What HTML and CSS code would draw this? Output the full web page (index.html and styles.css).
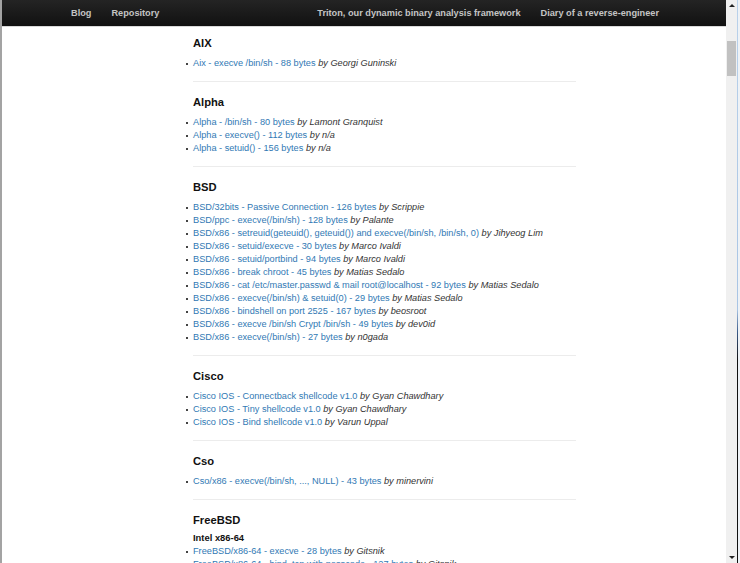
FILE: index.html
```html
<!DOCTYPE html>
<html lang="en">
<head>
<meta charset="utf-8">
<title>Shellcodes database</title>
<link rel="stylesheet" href="styles.css">
</head>
<body>
<div class="window">
  <div class="frame-left"></div>
  <div class="viewport">
    <nav class="navbar">
      <div class="nav-inner">
        <ul class="nav">
          <li><a href="#">Blog</a></li>
          <li><a href="#">Repository</a></li>
        </ul>
        <ul class="nav">
          <li><a href="#">Triton, our dynamic binary analysis framework</a></li>
          <li><a href="#">Diary of a reverse-engineer</a></li>
        </ul>
      </div>
    </nav>
    <main class="content">
      <section class="group">
        <h2 class="group-title">AIX</h2>
        <ul class="sc-list">
          <li><a href="#">Aix - execve /bin/sh - 88 bytes</a> <em>by Georgi Guninski</em></li>
        </ul>
      </section>
      <hr class="sep">
      <section class="group">
        <h2 class="group-title">Alpha</h2>
        <ul class="sc-list">
          <li><a href="#">Alpha - /bin/sh - 80 bytes</a> <em>by Lamont Granquist</em></li>
          <li><a href="#">Alpha - execve() - 112 bytes</a> <em>by n/a</em></li>
          <li><a href="#">Alpha - setuid() - 156 bytes</a> <em>by n/a</em></li>
        </ul>
      </section>
      <hr class="sep">
      <section class="group">
        <h2 class="group-title">BSD</h2>
        <ul class="sc-list">
          <li><a href="#">BSD/32bits - Passive Connection - 126 bytes</a> <em>by Scrippie</em></li>
          <li><a href="#">BSD/ppc - execve(/bin/sh) - 128 bytes</a> <em>by Palante</em></li>
          <li><a href="#">BSD/x86 - setreuid(geteuid(), geteuid()) and execve(/bin/sh, /bin/sh, 0)</a> <em>by Jihyeog Lim</em></li>
          <li><a href="#">BSD/x86 - setuid/execve - 30 bytes</a> <em>by Marco Ivaldi</em></li>
          <li><a href="#">BSD/x86 - setuid/portbind - 94 bytes</a> <em>by Marco Ivaldi</em></li>
          <li><a href="#">BSD/x86 - break chroot - 45 bytes</a> <em>by Matias Sedalo</em></li>
          <li><a href="#">BSD/x86 - cat /etc/master.passwd &amp; mail root@localhost - 92 bytes</a> <em>by Matias Sedalo</em></li>
          <li><a href="#">BSD/x86 - execve(/bin/sh) &amp; setuid(0) - 29 bytes</a> <em>by Matias Sedalo</em></li>
          <li><a href="#">BSD/x86 - bindshell on port 2525 - 167 bytes</a> <em>by beosroot</em></li>
          <li><a href="#">BSD/x86 - execve /bin/sh Crypt /bin/sh - 49 bytes</a> <em>by dev0id</em></li>
          <li><a href="#">BSD/x86 - execve(/bin/sh) - 27 bytes</a> <em>by n0gada</em></li>
        </ul>
      </section>
      <hr class="sep">
      <section class="group">
        <h2 class="group-title">Cisco</h2>
        <ul class="sc-list">
          <li><a href="#">Cisco IOS - Connectback shellcode v1.0</a> <em>by Gyan Chawdhary</em></li>
          <li><a href="#">Cisco IOS - Tiny shellcode v1.0</a> <em>by Gyan Chawdhary</em></li>
          <li><a href="#">Cisco IOS - Bind shellcode v1.0</a> <em>by Varun Uppal</em></li>
        </ul>
      </section>
      <hr class="sep">
      <section class="group">
        <h2 class="group-title">Cso</h2>
        <ul class="sc-list">
          <li><a href="#">Cso/x86 - execve(/bin/sh, ..., NULL) - 43 bytes</a> <em>by minervini</em></li>
        </ul>
      </section>
      <hr class="sep">
      <section class="group">
        <h2 class="group-title with-sub">FreeBSD</h2>
        <h3 class="arch-title">Intel x86-64</h3>
        <ul class="sc-list">
          <li><a href="#">FreeBSD/x86-64 - execve - 28 bytes</a> <em>by Gitsnik</em></li>
          <li><a href="#">FreeBSD/x86-64 - bind_tcp with passcode - 127 bytes</a> <em>by Gitsnik</em></li>
        </ul>
      </section>
    </main>
  </div>
  <div class="scrollbar">
    <div class="sb-arrow sb-up"></div>
    <div class="sb-track"><div class="sb-thumb"></div></div>
    <div class="sb-arrow sb-down"></div>
  </div>
  <div class="frame-right"></div>
</div>
</body>
</html>
```

FILE: styles.css
```css
html, body {
  margin: 0;
  padding: 0;
  height: 100%;
  overflow: hidden;
  background: #ffffff;
  font-family: "Liberation Sans", Arial, sans-serif;
}

.window {
  display: flex;
  height: 563px;
  width: 740px;
}

.frame-left {
  width: 2px;
  flex: none;
  background: #a3a3a3;
}

.viewport {
  width: 724px;
  flex: none;
  overflow: hidden;
  background: #ffffff;
}

/* ---------- navbar ---------- */
.navbar {
  height: 26px;
  background: linear-gradient(#242424, #111111);
  border-bottom: 1px solid #d9d9d9;
}

.nav-inner {
  display: flex;
  justify-content: space-between;
  padding: 0 57px 0 59px;
}

.nav {
  display: flex;
  list-style: none;
  margin: 0;
  padding: 0;
}

.nav a {
  display: block;
  padding: 0 10px;
  line-height: 26px;
  font-size: 9.2px;
  font-weight: bold;
  color: #c4c4c4;
  text-decoration: none;
}

/* ---------- content ---------- */
.content {
  margin-left: 191px;
  width: 383px;
  padding-top: 7.5px;
}

.group-title {
  margin: 0 0 6px;
  font-size: 11.2px;
  line-height: 16px;
  font-weight: bold;
  color: #111111;
}

.group-title.with-sub {
  margin-bottom: 3px;
}

.arch-title {
  margin: 0 0 1.5px;
  font-size: 9.4px;
  line-height: 13px;
  font-weight: bold;
  color: #111111;
}

.sep {
  margin: 11px 0 12px;
  border: 0;
  border-top: 1px solid #ececec;
  height: 0;
}

.sc-list {
  list-style: none;
  margin: 0;
  padding: 0;
}

.sc-list li {
  position: relative;
  font-size: 9.2px;
  line-height: 13px;
  color: #333333;
  white-space: nowrap;
}

.sc-list li::before {
  content: "";
  position: absolute;
  left: -7px;
  top: 6px;
  width: 2px;
  height: 2px;
  background: #444444;
}

.sc-list a {
  color: #3179b4;
  text-decoration: none;
}

.sc-list em {
  font-style: italic;
  color: #333333;
}

/* ---------- fake scrollbar ---------- */
.scrollbar {
  width: 11px;
  flex: none;
  background: #f0f0f0;
  display: flex;
  flex-direction: column;
}

.sb-arrow {
  height: 11px;
  flex: none;
  display: flex;
  align-items: center;
  justify-content: center;
}

.sb-arrow::before {
  content: "";
  width: 0;
  height: 0;
  border-left: 3px solid transparent;
  border-right: 3px solid transparent;
}

.sb-up::before {
  border-bottom: 3px solid #222222;
}

.sb-down::before {
  border-top: 3px solid #222222;
}

.sb-track {
  flex: 1;
  padding-top: 30px;
}

.sb-thumb {
  margin: 0 1px;
  height: 35px;
  background: #c1c1c1;
}

.frame-right {
  width: 3px;
  flex: none;
  background:
    linear-gradient(90deg, transparent 0 1px, #eef2f6 1px),
    linear-gradient(#b9d1ea 0, #a8c4e4 55%, #3a5a88 59%, #101010 64%, #101010 100%);
}
```
